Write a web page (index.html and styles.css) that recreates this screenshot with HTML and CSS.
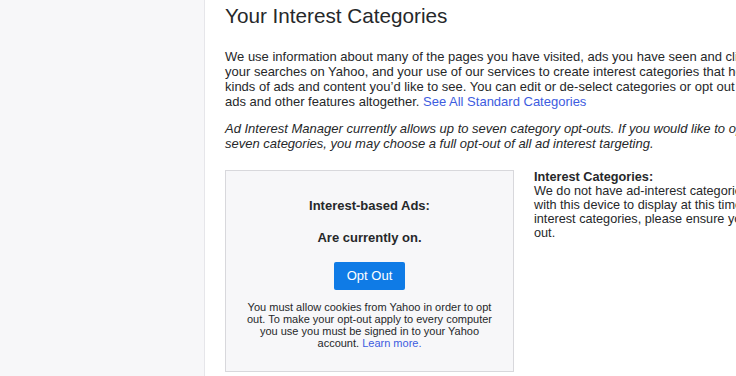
FILE: index.html
```html
<!DOCTYPE html>
<html>
<head>
    <meta charset="utf-8">
    <title>Ad Interest Manager</title>
    <link rel="stylesheet" href="styles.css">
</head>
<body>
    <div id="page">
        <div id="sidebar"></div>
        <div id="main">
            <h1>Your Interest Categories</h1>
            <p class="intro">We use information about many of the pages you have visited, ads you have seen and clicked on, your searches on Yahoo, and your use of our services to create interest categories that help tailor the kinds of ads and content you’d like to see. You can edit or de-select categories or opt out of targeted ads and other features altogether. <a href="#">See All Standard Categories</a></p>
            <p class="note">Ad Interest Manager currently allows up to seven category opt-outs. If you would like to opt out of over seven categories, you may choose a full opt-out of all ad interest targeting.</p>
            <div class="columns">
                <div class="optbox">
                    <div class="label">Interest-based Ads:</div>
                    <div class="status">Are currently on.</div>
                    <div class="btn">Opt Out</div>
                    <div class="small">You must allow cookies from Yahoo in order to opt out. To make your opt-out apply to every computer you use you must be signed in to your Yahoo account. <a href="#">Learn more.</a></div>
                </div>
                <div class="cats">
                    <b>Interest Categories:</b><br>
                    We do not have ad-interest categories associated with this device to display at this time. To see your interest categories, please ensure you have not opted out.
                </div>
            </div>
        </div>
    </div>
</body>
</html>
```

FILE: styles.css
```css
html, body {
    margin: 0;
    overflow: hidden;
    font-family: "Liberation Sans", Arial, Helvetica, sans-serif;
    color: #26282a;
}
#page {
    display: flex;
    width: 1200px;
    min-height: 376px;
}
#sidebar {
    width: 204px;
    background-color: #f7f7f9;
    border-right: 1px solid #e6e6ea;
}
#main {
    width: 589px;
    padding-left: 20px;
}
h1 {
    margin: 4px 0 0 0;
    font-size: 20.7px;
    font-weight: normal;
    line-height: 24px;
}
p {
    font-size: 13px;
    line-height: 15px;
}
.intro {
    margin: 21px 0 0 0;
}
.note {
    margin: 12px 0 0 0;
    font-style: italic;
}
a {
    color: #3d5ce0;
    text-decoration: none;
}
.columns {
    display: flex;
    gap: 20px;
    margin-top: 19px;
}
.optbox {
    width: 247px;
    flex-shrink: 0;
    padding: 27px 20px 22px 20px;
    background-color: #f7f7f9;
    border: 1px solid #d8d8dc;
    text-align: center;
}
.label, .status {
    font-size: 13px;
    font-weight: bold;
    line-height: 16px;
}
.status {
    margin-top: 16px;
}
.btn {
    display: inline-block;
    margin-top: 16px;
    padding: 0 13px;
    height: 28px;
    line-height: 28px;
    font-size: 13px;
    color: #fff;
    background-color: #0f7be6;
    border-radius: 2px;
}
.small {
    margin-top: 11px;
    font-size: 11px;
    line-height: 12px;
}
.cats {
    width: 303px;
    flex-shrink: 0;
    font-size: 12.7px;
    line-height: 14px;
}
```
